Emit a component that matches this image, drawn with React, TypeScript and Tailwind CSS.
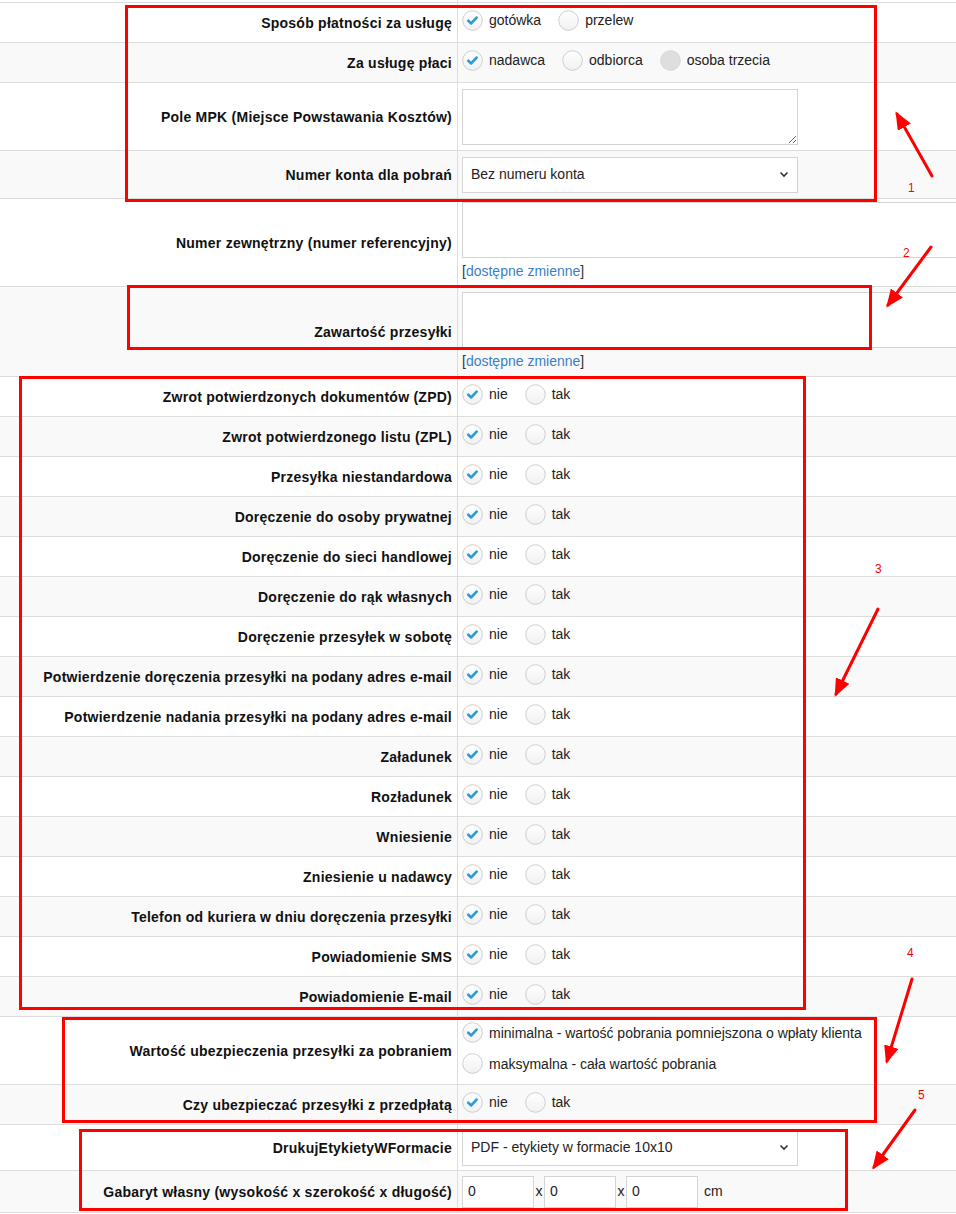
import React from 'react';

type RadioState = 'on' | 'off' | 'disabled';

const Radio = ({ state }: { state: RadioState }) => (
  <svg width="21" height="21" viewBox="0 0 21 21" className="shrink-0">
    <defs>
      <linearGradient id="rg" x1="0" y1="0" x2="0" y2="1">
        <stop offset="0" stopColor="#ffffff" />
        <stop offset="1" stopColor="#f1f1f1" />
      </linearGradient>
    </defs>
    <circle
      cx="10.5"
      cy="10.5"
      r="9.8"
      fill={state === 'disabled' ? '#dedede' : 'url(#rg)'}
      stroke={state === 'disabled' ? '#d6d6d6' : '#cdcdcd'}
      strokeWidth="1"
    />
    {state === 'on' && (
      <path
        d="M6.3 10.8 L9.2 13.4 L14.6 7.6"
        fill="none"
        stroke="#2e9ad6"
        strokeWidth="2.7"
        strokeLinecap="round"
        strokeLinejoin="round"
      />
    )}
  </svg>
);

const Option = ({ state, text }: { state: RadioState; text: string }) => (
  <div className="flex items-center gap-[6px] mr-[17px]">
    <Radio state={state} />
    <span className="text-[14px] text-[#222] leading-[20px]">{text}</span>
  </div>
);

// radios sit a little above the row's middle
const Group = ({ children }: { children: React.ReactNode }) => (
  <div className="flex items-center pb-[5px]">{children}</div>
);

const YesNo = () => (
  <Group>
    <Option state="on" text="nie" />
    <Option state="off" text="tak" />
  </Group>
);

const Chevron = () => (
  <svg width="10" height="7" viewBox="0 0 10 7">
    <path d="M1.5 1.5 L5 5 L8.5 1.5" fill="none" stroke="#333" strokeWidth="1.6" />
  </svg>
);

const FakeSelect = ({ value }: { value: string }) => (
  <div className="w-[336px] h-[36px] border border-[#d4d4d4] bg-white flex items-center justify-between pl-[8px] pr-[8px] text-[14px] text-[#222]">
    <span>{value}</span>
    <Chevron />
  </div>
);

const VarsLink = () => (
  <div className="mt-[4px] leading-[18px] text-[14px] text-[#333]">
    [<span className="text-[#3a7fc4]">dostępne zmienne</span>]
  </div>
);

const Row = ({
  label,
  gray,
  h,
  valueClass = 'items-center',
  children,
}: {
  label: string;
  gray: boolean;
  h: string;
  valueClass?: string;
  children?: React.ReactNode;
}) => (
  <div className={`flex border-b border-[#dddddd] ${h} ${gray ? 'bg-[#f9f9f9]' : 'bg-white'}`}>
    <div className="w-[458px] shrink-0 border-r border-[#dddddd] flex items-center justify-end pr-[5px]">
      <span className="font-bold text-[14px] tracking-[0.25px] text-[#111] leading-[16px] text-right whitespace-nowrap">
        {label}
      </span>
    </div>
    <div className={`flex-1 min-w-0 overflow-hidden flex pl-[4px] ${valueClass}`}>{children}</div>
  </div>
);

const yesNoRows = [
  'Zwrot potwierdzonych dokumentów (ZPD)',
  'Zwrot potwierdzonego listu (ZPL)',
  'Przesyłka niestandardowa',
  'Doręczenie do osoby prywatnej',
  'Doręczenie do sieci handlowej',
  'Doręczenie do rąk własnych',
  'Doręczenie przesyłek w sobotę',
  'Potwierdzenie doręczenia przesyłki na podany adres e-mail',
  'Potwierdzenie nadania przesyłki na podany adres e-mail',
  'Załadunek',
  'Rozładunek',
  'Wniesienie',
  'Zniesienie u nadawcy',
  'Telefon od kuriera w dniu doręczenia przesyłki',
  'Powiadomienie SMS',
  'Powiadomienie E-mail',
];

const SmallInput = () => (
  <div className="w-[72px] h-[32px] border border-[#d4d4d4] bg-white flex items-center pl-[5px] text-[14px] text-[#222]">
    0
  </div>
);

const arrows = [
  { x1: 932, y1: 176, x2: 897, y2: 114 },
  { x1: 931, y1: 247, x2: 888, y2: 305 },
  { x1: 878, y1: 609, x2: 836, y2: 694 },
  { x1: 912, y1: 979, x2: 887, y2: 1061 },
  { x1: 915, y1: 1110, x2: 874, y2: 1167 },
];

const numbers = [
  { n: '1', cls: 'left-[908px] top-[181px]' },
  { n: '2', cls: 'left-[903px] top-[246px]' },
  { n: '3', cls: 'left-[875px] top-[562px]' },
  { n: '4', cls: 'left-[907px] top-[946px]' },
  { n: '5', cls: 'left-[918px] top-[1088px]' },
];

export default function App() {
  return (
    <div className="relative w-[956px] h-[1214px] overflow-hidden bg-white font-['Liberation_Sans',Arial,sans-serif]">
      <div className="h-[3px] border-b border-[#dddddd] flex">
        <div className="w-[458px] border-r border-[#dddddd]" />
      </div>

      <Row label="Sposób płatności za usługę" gray={false} h="h-[40px]">
        <Group>
          <Option state="on" text="gotówka" />
          <Option state="off" text="przelew" />
        </Group>
      </Row>
      <Row label="Za usługę płaci" gray h="h-[40px]">
        <Group>
          <Option state="on" text="nadawca" />
          <Option state="off" text="odbiorca" />
          <Option state="disabled" text="osoba trzecia" />
        </Group>
      </Row>
      <Row label="Pole MPK (Miejsce Powstawania Kosztów)" gray={false} h="h-[68px]">
        <textarea className="w-[336px] h-[56px] border border-[#d4d4d4] bg-white outline-none" />
      </Row>
      <Row label="Numer konta dla pobrań" gray h="h-[48px]">
        <FakeSelect value="Bez numeru konta" />
      </Row>
      <Row label="Numer zewnętrzny (numer referencyjny)" gray={false} h="h-[88px]" valueClass="flex-col pt-[3px]">
        <div className="w-[520px] h-[56px] shrink-0 border border-[#d4d4d4] bg-white" />
        <VarsLink />
      </Row>
      <Row label="Zawartość przesyłki" gray h="h-[90px]" valueClass="flex-col pt-[5px]">
        <div className="w-[520px] h-[56px] shrink-0 border border-[#d4d4d4] bg-white" />
        <VarsLink />
      </Row>

      {yesNoRows.map((label, i) => (
        <Row key={label} label={label} gray={i % 2 === 1} h="h-[40px]">
          <YesNo />
        </Row>
      ))}

      <Row
        label="Wartość ubezpieczenia przesyłki za pobraniem"
        gray={false}
        h="h-[68px]"
        valueClass="flex-col justify-start pt-[5px] gap-[10px]"
      >
        <Option state="on" text="minimalna - wartość pobrania pomniejszona o wpłaty klienta" />
        <Option state="off" text="maksymalna - cała wartość pobrania" />
      </Row>
      <Row label="Czy ubezpieczać przesyłki z przedpłatą" gray h="h-[40px]">
        <YesNo />
      </Row>
      <Row label="DrukujEtykietyWFormacie" gray={false} h="h-[46px]">
        <FakeSelect value="PDF - etykiety w formacie 10x10" />
      </Row>
      <Row label="Gabaryt własny (wysokość x szerokość x długość)" gray h="h-[42px]">
        <div className="flex items-center text-[14px] text-[#222]">
          <SmallInput />
          <span className="w-[10px] text-center">x</span>
          <SmallInput />
          <span className="w-[10px] text-center">x</span>
          <SmallInput />
          <span className="ml-[6px]">cm</span>
        </div>
      </Row>

      {/* annotation boxes */}
      <div className="absolute left-[125px] top-[5px] w-[752px] h-[197px] border-[3px] border-[#ff0000] pointer-events-none" />
      <div className="absolute left-[127px] top-[285px] w-[745px] h-[65px] border-[3px] border-[#ff0000] pointer-events-none" />
      <div className="absolute left-[19px] top-[376px] w-[787px] h-[634px] border-[3px] border-[#ff0000] pointer-events-none" />
      <div className="absolute left-[62px] top-[1017px] w-[815px] h-[106px] border-[3px] border-[#ff0000] pointer-events-none" />
      <div className="absolute left-[79px] top-[1129px] w-[769px] h-[82px] border-[3px] border-[#ff0000] pointer-events-none" />

      <svg className="absolute left-0 top-0 pointer-events-none" width="956" height="1214" viewBox="0 0 956 1214">
        <defs>
          <marker id="ah" markerWidth="6" markerHeight="5" refX="5" refY="2.5" orient="auto" markerUnits="strokeWidth">
            <path d="M0 0 L6 2.5 L0 5 Z" fill="#ff0000" />
          </marker>
        </defs>
        {arrows.map((a, i) => (
          <line key={i} x1={a.x1} y1={a.y1} x2={a.x2} y2={a.y2} stroke="#ff0000" strokeWidth="3" strokeLinecap="round" markerEnd="url(#ah)" />
        ))}
      </svg>
      {numbers.map((n) => (
        <span key={n.n} className={`absolute ${n.cls} text-[12px] leading-[14px] text-[#ff0000]`}>
          {n.n}
        </span>
      ))}
    </div>
  );
}
